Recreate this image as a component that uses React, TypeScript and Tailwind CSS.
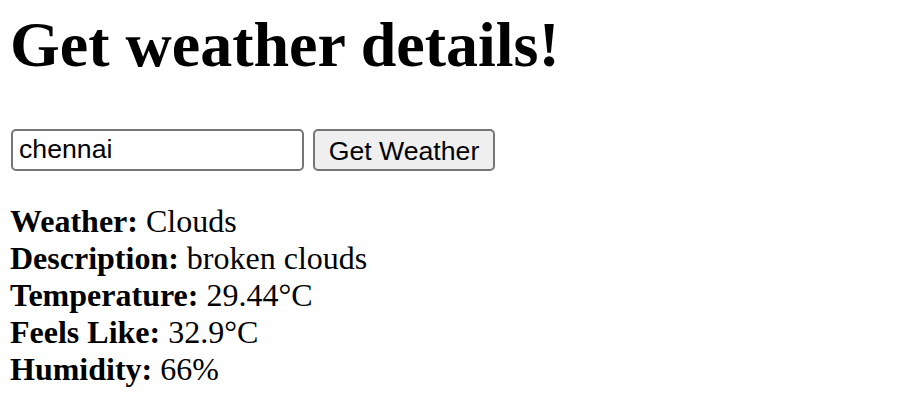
import { useState } from "react";

type Weather = {
  main: string;
  description: string;
  temp: number;
  feelsLike: number;
  humidity: number;
};

const weather: Weather = {
  main: "Clouds",
  description: "broken clouds",
  temp: 29.44,
  feelsLike: 32.9,
  humidity: 66,
};

export default function App() {
  const [city, setCity] = useState("chennai");

  return (
    <div className="min-h-screen bg-white pl-[10px] pt-[8px] text-black font-['Liberation_Serif','Times_New_Roman',serif]">
      <h1 className="text-[64px] font-bold leading-[74px]">Get weather details!</h1>

      <div className="mt-[47px] flex items-center gap-[9px] pl-px font-['Liberation_Sans',Arial,sans-serif] text-[26.67px]">
        <input
          className="h-[42px] w-[293px] rounded-[5px] border-2 border-[#767676] bg-white pl-[6px] pb-px text-black outline-none"
          type="text"
          value={city}
          onChange={(e) => setCity(e.target.value)}
        />
        <button className="h-[42px] w-[182px] rounded-[5px] border-2 border-[#767676] bg-[#efefef] pb-[3px] text-black">
          Get Weather
        </button>
      </div>

      <div className="mt-[32px] text-[32px] leading-[37px]">
        <div>
          <b>Weather:</b> {weather.main}
        </div>
        <div>
          <b>Description:</b> {weather.description}
        </div>
        <div>
          <b>Temperature:</b> {weather.temp}°C
        </div>
        <div>
          <b>Feels Like:</b> {weather.feelsLike}°C
        </div>
        <div>
          <b>Humidity:</b> {weather.humidity}%
        </div>
      </div>
    </div>
  );
}
